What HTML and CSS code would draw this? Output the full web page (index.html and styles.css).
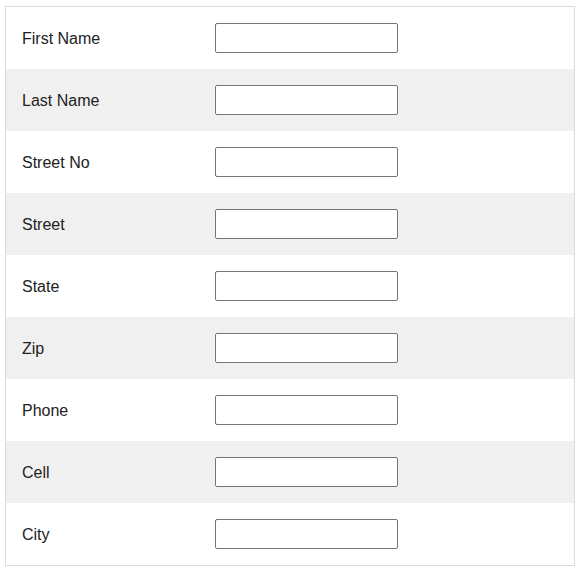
FILE: index.html
```html
<!DOCTYPE html>
<html>
<head>
<meta charset="utf-8">
<link rel="stylesheet" href="styles.css">
</head>
<body>
<div class="form-table">
  <div class="row"><label class="label">First Name</label><input class="field" type="text"></div>
  <div class="row alt"><label class="label">Last Name</label><input class="field" type="text"></div>
  <div class="row"><label class="label">Street No</label><input class="field" type="text"></div>
  <div class="row alt"><label class="label">Street</label><input class="field" type="text"></div>
  <div class="row"><label class="label">State</label><input class="field" type="text"></div>
  <div class="row alt"><label class="label">Zip</label><input class="field" type="text"></div>
  <div class="row"><label class="label">Phone</label><input class="field" type="text"></div>
  <div class="row alt"><label class="label">Cell</label><input class="field" type="text"></div>
  <div class="row"><label class="label">City</label><input class="field" type="text"></div>
</div>
</body>
</html>
```
FILE: styles.css
```css
html, body {
  margin: 0;
  padding: 0;
  background: #fff;
}
body {
  padding: 6px 0 0 5px;
  font-family: "Liberation Sans", Arial, sans-serif;
  font-size: 16px;
  color: #222;
}
.form-table {
  width: 570px;
  box-sizing: border-box;
  border: 1px solid #dcdcdc;
  display: flex;
  flex-direction: column;
}
.row {
  height: 62px;
  display: flex;
  align-items: center;
  background: #fff;
}
.row.alt {
  background: #f0f0f0;
}
.label {
  width: 209px;
  box-sizing: border-box;
  padding-left: 16px;
  padding-top: 2px;
}
.field {
  width: 183px;
  height: 30px;
  box-sizing: border-box;
  margin: 0;
  border: 1px solid #767676;
  border-radius: 2px;
  background: #fff;
  padding: 2px 6px;
  font: inherit;
}
```
